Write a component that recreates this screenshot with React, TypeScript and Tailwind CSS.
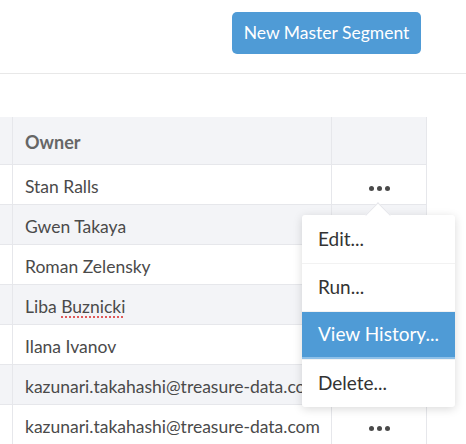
import { useState } from 'react';

const owners = [
  'Stan Ralls',
  'Gwen Takaya',
  'Roman Zelensky',
  'Liba Buznicki',
  'Ilana Ivanov',
  'kazunari.takahashi@treasure-data.com',
  'kazunari.takahashi@treasure-data.com',
];

const menuItems = ['Edit...', 'Run...', 'View History...', 'Delete...'];

function Dots() {
  return (
    <div className="flex items-center gap-[3px]">
      <span className="w-[5px] h-[5px] rounded-full bg-[#4a4a4a]" />
      <span className="w-[5px] h-[5px] rounded-full bg-[#4a4a4a]" />
      <span className="w-[5px] h-[5px] rounded-full bg-[#4a4a4a]" />
    </div>
  );
}

export default function App() {
  const [openRow] = useState(0);
  const [hovered, setHovered] = useState(2);

  return (
    <div className="relative w-[466px] h-[444px] overflow-hidden bg-white text-[#4a4a4a] font-['Lato','Liberation_Sans',sans-serif]">
      <div className="h-[74px] border-b border-[#e8e8e8] flex justify-end items-start pt-[12px] pr-[45px]">
        <button className="h-[42px] w-[189px] rounded-[5px] bg-[#4f9bd6] text-white text-[17.5px] pt-[1px]">
          New Master Segment
        </button>
      </div>

      <div className="mt-[43px] w-[427px] border-r border-[#e6e7eb]">
        <div className="flex h-[48px] bg-[#f3f4f7] border-b border-[#e6e7eb]">
          <div className="w-[13px] border-r border-[#e6e7eb]" />
          <div className="w-[319px] border-r border-[#e6e7eb] flex items-center pl-[12px] pt-[3px] text-[18px] font-bold text-[#666]">
            Owner
          </div>
          <div className="flex-1" />
        </div>
        {owners.map((owner, i) => (
          <div
            key={i}
            className={`flex h-[40px] border-b border-[#e6e7eb] ${i % 2 === 1 ? 'bg-[#f3f4f7]' : 'bg-white'}`}
          >
            <div className="w-[13px] border-r border-[#e6e7eb]" />
            <div className="w-[319px] border-r border-[#e6e7eb] flex items-center pl-[12px] pt-[5px] text-[17.5px] whitespace-nowrap overflow-hidden">
              {owner === 'Liba Buznicki' ? (
                <span>
                  Liba{' '}
                  <span className="underline decoration-dotted decoration-[#e05a5a] decoration-2 underline-offset-[4px]">
                    Buznicki
                  </span>
                </span>
              ) : (
                owner
              )}
            </div>
            <div className="flex-1 flex items-center justify-center pt-[7px]">
              {(i === 0 || i === 6) && <Dots />}
            </div>
          </div>
        ))}
      </div>

      {openRow === 0 && (
        <div className="absolute left-[302px] top-[215px] w-[153px] bg-white rounded-[3px] shadow-[0_2px_10px_rgba(0,0,0,0.15)]">
          <div className="absolute left-[67px] -top-[9px] w-[18px] h-[18px] rotate-45 bg-white border-l border-t border-[#e6e7eb]" />
          <div className="relative">
            {menuItems.map((item, i) => (
              <div
                key={item}
                onMouseEnter={() => setHovered(i)}
                className={`h-[48px] flex items-center pl-[16px] text-[19px] ${
                  i > 0 ? 'border-t border-[#f2f2f2]' : ''
                } ${hovered === i ? 'bg-[#4f9bd6] text-white border-b-2 border-b-[#8ec0e8]' : 'text-[#333]'}`}
              >
                {item}
              </div>
            ))}
          </div>
        </div>
      )}
    </div>
  );
}
